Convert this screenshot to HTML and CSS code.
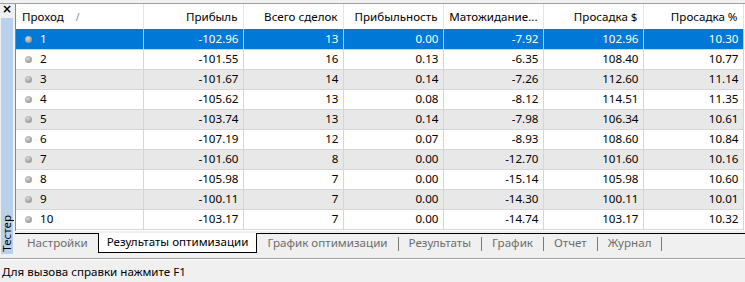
FILE: index.html
```html
<!DOCTYPE html>
<html>
<head>
<meta charset="utf-8">
<link rel="stylesheet" href="styles.css">
</head>
<body>
<div class="app">
  <div class="topline"></div>
  <div class="main">
    <div class="side">
      <div class="close">×</div>
      <div class="strip"><span class="strip-label">Тестер</span></div>
    </div>
    <div class="content">
      <div class="grid">
        <table>
          <colgroup>
            <col class="c1"><col class="cn"><col class="cn"><col class="cn"><col class="cn"><col class="cn"><col class="cn">
          </colgroup>
          <thead>
            <tr>
              <th class="left">Проход <span class="sort">/</span></th>
              <th>Прибыль</th>
              <th>Всего сделок</th>
              <th>Прибыльность</th>
              <th>Матожидание...</th>
              <th>Просадка $</th>
              <th>Просадка %</th>
            </tr>
          </thead>
          <tbody>
            <tr class="sel"><td class="left"><span class="dot"></span>1</td><td>-102.96</td><td>13</td><td>0.00</td><td>-7.92</td><td>102.96</td><td>10.30</td></tr>
            <tr><td class="left"><span class="dot"></span>2</td><td>-101.55</td><td>16</td><td>0.13</td><td>-6.35</td><td>108.40</td><td>10.77</td></tr>
            <tr class="alt"><td class="left"><span class="dot"></span>3</td><td>-101.67</td><td>14</td><td>0.14</td><td>-7.26</td><td>112.60</td><td>11.14</td></tr>
            <tr><td class="left"><span class="dot"></span>4</td><td>-105.62</td><td>13</td><td>0.08</td><td>-8.12</td><td>114.51</td><td>11.35</td></tr>
            <tr class="alt"><td class="left"><span class="dot"></span>5</td><td>-103.74</td><td>13</td><td>0.14</td><td>-7.98</td><td>106.34</td><td>10.61</td></tr>
            <tr><td class="left"><span class="dot"></span>6</td><td>-107.19</td><td>12</td><td>0.07</td><td>-8.93</td><td>108.60</td><td>10.84</td></tr>
            <tr class="alt"><td class="left"><span class="dot"></span>7</td><td>-101.60</td><td>8</td><td>0.00</td><td>-12.70</td><td>101.60</td><td>10.16</td></tr>
            <tr><td class="left"><span class="dot"></span>8</td><td>-105.98</td><td>7</td><td>0.00</td><td>-15.14</td><td>105.98</td><td>10.60</td></tr>
            <tr class="alt"><td class="left"><span class="dot"></span>9</td><td>-100.11</td><td>7</td><td>0.00</td><td>-14.30</td><td>100.11</td><td>10.01</td></tr>
            <tr><td class="left"><span class="dot"></span>10</td><td>-103.17</td><td>7</td><td>0.00</td><td>-14.74</td><td>103.17</td><td>10.32</td></tr>
          </tbody>
        </table>
      </div>
      <div class="tabs">
        <div class="tab">Настройки</div>
        <div class="tab active">Результаты оптимизации</div>
        <div class="tab">График оптимизации</div><span class="sep"></span>
        <div class="tab">Результаты</div><span class="sep"></span>
        <div class="tab">График</div><span class="sep"></span>
        <div class="tab">Отчет</div><span class="sep"></span>
        <div class="tab">Журнал</div><span class="sep"></span>
      </div>
    </div>
  </div>
  <div class="status">Для вызова справки нажмите F1</div>
</div>
</body>
</html>
```
FILE: styles.css
```css
* { box-sizing: border-box; }
html, body { margin: 0; padding: 0; }
body {
  width: 745px;
  height: 282px;
  overflow: hidden;
  background: #f0f0f0;
  font-family: "Noto Sans", "Open Sans", sans-serif;
  font-size: 11.6px;
  color: #000;
}
.app { display: flex; flex-direction: column; height: 282px; }
.topline { height: 4px; border-top: 1px solid #f0f0f0; border-bottom: 1px solid #a0a0a0; background: #f0f0f0; }
.main { display: flex; height: 250px; }
.side { width: 15px; display: flex; flex-direction: column; }
.close {
  height: 14px;
  font-family: "DejaVu Sans", sans-serif;
  font-weight: bold;
  font-size: 12px;
  line-height: 11px;
  padding-left: 2px;
}
.strip {
  flex: 1;
  margin: 0 2px 0 1px;
  background: #b9d1ea;
  display: flex;
  align-items: flex-end;
  justify-content: center;
  padding-bottom: 2px;
}
.strip-label {
  writing-mode: vertical-rl;
  transform: rotate(180deg);
  font-size: 11.6px;
  line-height: 12px;
  color: #000;
}
.content { flex: 1; display: flex; flex-direction: column; }
.grid {
  height: 227px;
  background: #fff;
  border-left: 1px solid #828790;
  overflow: hidden;
}
table { border-collapse: collapse; table-layout: fixed; width: 727px; }
col.c1 { width: 127px; }
col.cn { width: 100px; }
th {
  height: 25px;
  font-weight: normal;
  text-align: right;
  padding: 0 5px 1px 4px;
  border-right: 1px solid #e5e5e5;
  background: #fff;
  white-space: nowrap;
  overflow: hidden;
}
th.left { text-align: left; padding-left: 6px; }
.sort { color: #888; font-size: 10px; margin-left: 9px; }
td {
  height: 20px;
  padding: 0 4px 0 4px;
  text-align: right;
  border-right: 1px solid #d6d6d6;
  border-bottom: 1px solid #d6d6d6;
  white-space: nowrap;
  line-height: 18px;
}
td.left { text-align: left; padding-left: 9px; }
tr.alt td { background: #e8e8e8; }
tr.sel td { background: #0078d7; color: #fff; border-right-color: #c8c8c8; }
.dot {
  display: inline-block;
  width: 7px; height: 7px;
  border-radius: 50%;
  background: radial-gradient(circle at 40% 35%, #d8d8d8, #9a9a9a 70%, #8a8a8a);
  margin-right: 8px;
  vertical-align: 0px;
}
.tabs {
  display: flex;
  align-items: center;
  height: 20px;
  border-top: 1px solid #000;
  margin-top: 2px;
  color: #6d6d6d;
  padding-left: 1px;
}
.tab { padding: 0 10px; height: 19px; line-height: 17px; }
.tab.active {
  background: #fff;
  color: #000;
  border: 1px solid #000;
  border-top: none;
  height: 20px;
  margin-top: -1px;
  padding: 0 8px;
}
.tab:first-child { padding-left: 11px; padding-right: 10px; }
.sep { width: 1px; height: 14px; background: #7a7a7a; }
.status {
  margin-top: 4px;
  border-top: 1px solid #a0a0a0;
  box-shadow: inset 0 1px 0 #fff;
  flex: 1;
  padding: 5px 0 0 2px;
}
```
